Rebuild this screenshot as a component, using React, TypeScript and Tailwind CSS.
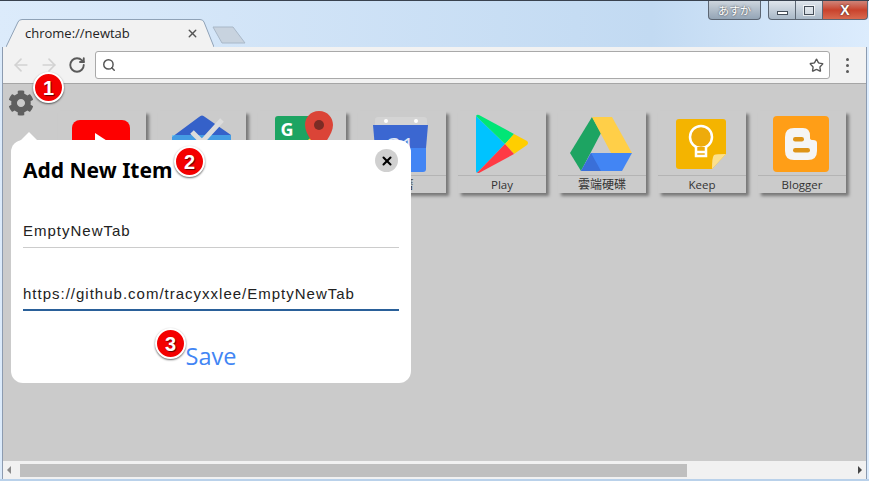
import React from "react";
import { ArrowLeft, ArrowRight, RotateCw, Search, Star, X } from "lucide-react";
import { FaCog } from "react-icons/fa";

// Tile icons, all on the same 64x64 box
const YouTubeIcon = () => (
  <svg viewBox="0 0 64 64" className="w-16 h-16">
    <rect x="2" y="9" width="58" height="42" rx="8" fill="#fe0000" />
    <path d="M25 22 L45 35 L25 47 Z" fill="#fff" />
  </svg>
);

const InboxIcon = () => (
  <svg viewBox="0 0 64 64" className="w-16 h-16">
    <path d="M2 26 L29 6 Q32 3 35 6 L61 24 L61 60 L2 60 Z" fill="#3561c9" />
    <path d="M2 24 H61 V60 H2 Z" fill="#4fc3f7" opacity="0.6" />
    <path d="M22 21 L32 31 L52 9" fill="none" stroke="#dcdcdc" strokeWidth="5" />
  </svg>
);

const MapsIcon = () => (
  <svg viewBox="0 0 64 64" className="w-16 h-16">
    <rect x="5" y="5" width="42" height="50" rx="3" fill="#1da462" />
    <path d="M30 35 L47 22 V55 H20 Z" fill="#fdd835" />
    <text x="17" y="25" fontSize="18" fontWeight="700" fill="#fff" textAnchor="middle" fontFamily="'Open Sans', sans-serif">G</text>
    <path d="M49 0 C40 0 35 7 35 14 C35 24 46 34 49 44 C52 34 63 24 63 14 C63 7 58 0 49 0 Z" fill="#db4437" />
    <circle cx="49" cy="14" r="5" fill="#7b2c25" />
  </svg>
);

const CalendarIcon = () => (
  <svg viewBox="0 0 64 64" className="w-16 h-16">
    <path d="M5 9 Q5 6 8 6 H54 Q57 6 57 9 V14 H5 Z" fill="#d4d4d4" />
    <circle cx="16" cy="10" r="2" fill="#fff" />
    <circle cx="46" cy="10" r="2" fill="#fff" />
    <path d="M3 14 H58 L56 37 H5 Z" fill="#3b67d1" />
    <path d="M5 37 H56 V58 Q56 61 53 61 H8 Q5 61 5 58 Z" fill="#4285f4" />
    <text x="31" y="44" fontSize="24" fill="#dfe6f5" textAnchor="middle" fontFamily="'Open Sans', sans-serif">31</text>
  </svg>
);

const PlayIcon = () => (
  <svg viewBox="0 0 64 64" className="w-16 h-16">
    <path d="M6 5 L35 33 L7 62 Q6 61 6 60 Z" fill="#00c3ff" />
    <path d="M6 5 Q7 3 9 4 L44 23 L35 33 Z" fill="#00e676" />
    <path d="M44 23 L57 30 Q59 32 57 34 L44 43 L35 33 Z" fill="#ffce00" />
    <path d="M35 33 L44 43 L9 62 Q8 62 7 62 Z" fill="#ff3a44" />
  </svg>
);

const DriveIcon = () => (
  <svg viewBox="0 0 64 64" className="w-16 h-16">
    <path d="M22 6 L31 22 L11 60 L0 42 Z" fill="#1da462" />
    <path d="M22 6 H42 L62 42 H41 Z" fill="#ffcf48" />
    <path d="M21 42 H62 L52 60 H11 Z" fill="#4285f4" />
    <path d="M21 42 L11 60 H31 Z" fill="#3a6fd8" />
  </svg>
);

const KeepIcon = () => (
  <svg viewBox="0 0 64 64" className="w-16 h-16">
    <path d="M9 8 H53 Q56 8 56 11 V43 L42 58 H9 Q6 58 6 55 V11 Q6 8 9 8 Z" fill="#f4b400" />
    <path d="M42 58 Q42 46 44 44 Q46 43 56 43 Z" fill="#fbe08e" />
    <circle cx="31" cy="26" r="11" fill="#eeab0b" stroke="#fff" strokeWidth="2.5" />
    <path d="M26 36 V45 H36 V36 M26 41 H36" fill="#eeab0b" stroke="#fff" strokeWidth="2.5" />
  </svg>
);

const BloggerIcon = () => (
  <svg viewBox="0 0 64 64" className="w-16 h-16">
    <rect x="3" y="5" width="56" height="56" rx="4" fill="#ff9e17" />
    <path d="M24 17 H33 Q40 17 40 25 V27 Q40 29 43 29 Q47 29 47 32 V40 Q47 49 38 49 H24 Q15 49 15 40 V26 Q15 17 24 17 Z" fill="#f5f5f5" />
    <rect x="23" y="26" width="11" height="4.5" rx="2.2" fill="#de9418" />
    <rect x="23" y="37" width="17" height="4.5" rx="2.2" fill="#de9418" />
  </svg>
);

const tiles = [
  { id: "youtube", label: "", icon: <YouTubeIcon /> },
  { id: "inbox", label: "", icon: <InboxIcon /> },
  { id: "maps", label: "", icon: <MapsIcon /> },
  { id: "calendar", label: "日曆", icon: <CalendarIcon /> },
  { id: "play", label: "Play", icon: <PlayIcon /> },
  { id: "drive", label: "雲端硬碟", icon: <DriveIcon /> },
  { id: "keep", label: "Keep", icon: <KeepIcon /> },
  { id: "blogger", label: "Blogger", icon: <BloggerIcon /> },
];

function Badge({ n, className }: { n: number; className: string }) {
  return (
    <div
      className={`absolute w-[31px] h-[31px] rounded-full bg-[#f40000] border-2 border-white shadow-[0_1px_2px_rgba(0,0,0,0.6)] flex items-center justify-center text-white text-[20px] font-bold font-['Liberation_Sans',sans-serif] [text-shadow:1px_1px_1px_rgba(0,0,0,0.6)] ${className}`}
    >
      {n}
    </div>
  );
}

export default function App() {
  return (
    <div className="relative w-[869px] h-[481px] overflow-hidden flex flex-col border-t border-[#39424f] bg-gradient-to-r from-[#dcebfb] via-[#c2daf2] via-75% to-[#dcecfd] font-['Open_Sans',sans-serif]">
      {/* Window caption */}
      <div className="h-[18px] flex justify-end pr-px">
        <div className="w-[53px] h-[19px] mr-[7px] rounded-b-[4px] border border-t-0 border-[#5c6673] bg-gradient-to-b from-[#cdd5dd] to-[#94a5b6] flex items-center justify-center text-[11px] leading-none text-white font-['Noto_Sans_CJK_JP',sans-serif] [text-shadow:0_0_2px_#333]">
          あすか
        </div>
        <div className="w-[28px] h-[19px] rounded-bl-[4px] border border-t-0 border-[#5c6673] bg-gradient-to-b from-[#dfe5ec] to-[#a9b8c7] flex items-center justify-center">
          <div className="w-[11px] h-[4px] mt-[5px] bg-white border border-[#444d58]" />
        </div>
        <div className="w-[27px] h-[19px] border-b border-r border-[#5c6673] bg-gradient-to-b from-[#dfe5ec] to-[#a9b8c7] flex items-center justify-center">
          <div className="w-[10px] h-[9px] border border-[#444d58] bg-white/40 outline outline-white/70" />
        </div>
        <div className="w-[45px] h-[19px] rounded-br-[4px] border-b border-r border-[#5c6673] bg-gradient-to-b from-[#cf8378] via-[#c9422c] to-[#d8694f] flex items-center justify-center text-white font-bold text-[14px] leading-none font-['Liberation_Sans',sans-serif] [text-shadow:0_0_2px_#222]">
          X
        </div>
      </div>

      {/* Tab strip */}
      <div className="h-[28px] flex items-end pl-[6px]">
        <div className="relative w-[208px] h-[28px] flex items-center pl-[19px] pr-[15px] justify-between">
          <svg viewBox="0 0 208 28" className="absolute inset-0 w-[208px] h-[28px]">
            <path d="M0 28 L12 3 Q13 0.5 16 0.5 H194 Q197 0.5 198 3 L208 28" fill="#f2f2f2" stroke="#8fa2b7" />
          </svg>
          <span className="relative text-[13px] leading-none text-[#222]">chrome://newtab</span>
          <X className="relative w-[13px] h-[13px] text-[#555]" strokeWidth={2.5} />
        </div>
        <svg viewBox="0 0 34 18" className="w-[34px] h-[18px] mb-[3px] -ml-[2px]">
          <path d="M1 1 H21 L33 17 H10 Z" fill="#c8d3df" stroke="#a9b8c8" strokeLinejoin="round" />
        </svg>
      </div>

      {/* Browser body */}
      <div className="flex-1 min-h-0 mx-[2px] flex flex-col border-x border-[#8c9bb0] bg-[#f2f2f2]">
        {/* Toolbar */}
        <div className="h-[37px] flex items-center border-b border-[#a6a6a6] pl-[8px]">
          <ArrowLeft className="w-[20px] h-[20px] text-[#d2d2d2]" />
          <ArrowRight className="w-[20px] h-[20px] ml-[8px] text-[#d2d2d2]" />
          <RotateCw className="w-[18px] h-[18px] ml-[9px] text-[#5a5a5a]" strokeWidth={2.5} />
          <div className="w-[735px] h-[28px] ml-[9px] rounded-[3px] border border-[#a9a9a9] bg-white flex items-center justify-between pl-[6px] pr-[5px]">
            <Search className="w-[14px] h-[14px] text-[#555]" strokeWidth={2.5} />
            <Star className="w-[15px] h-[15px] text-[#555]" strokeWidth={2.2} />
          </div>
          <div className="ml-[16px] flex flex-col gap-[3px]">
            <div className="w-[3px] h-[3px] rounded-full bg-[#5a5a5a]" />
            <div className="w-[3px] h-[3px] rounded-full bg-[#5a5a5a]" />
            <div className="w-[3px] h-[3px] rounded-full bg-[#5a5a5a]" />
          </div>
        </div>

        {/* New tab page */}
        <div className="flex-1 min-h-0 bg-[#cbcbcb] pl-[55px] pt-[27px] overflow-hidden">
          <div className="flex gap-[12px]">
            {tiles.map((tile) => (
              <div key={tile.id} className="w-[88px] h-[82px] shrink-0 flex flex-col items-center shadow-[3px_3px_3px_#777]">
                <div className="h-[64px] shrink-0">{tile.icon}</div>
                <div className={`w-full border-t border-[#b4b4b4] text-center leading-[18px] text-[#333] font-['Open_Sans','Noto_Sans_CJK_TC',sans-serif] ${tile.id === "drive" ? "text-[12px]" : "text-[11.5px]"}`}>
                  {tile.label}
                </div>
              </div>
            ))}
          </div>
        </div>

        {/* Horizontal scrollbar */}
        <div className="h-[18px] flex items-center justify-between px-[4px] bg-[#f1f1f1]">
          <div className="w-0 h-0 border-y-[4px] border-y-transparent border-r-[4px] border-r-[#8a8a8a]" />
          <div className="w-[667px] h-[13px] mr-auto ml-[9px] bg-[#bfbfbf]" />
          <div className="w-0 h-0 border-y-[4px] border-y-transparent border-l-[4px] border-l-[#444]" />
        </div>
      </div>
      <div className="h-[2px] bg-[#b9d1ea]" />

      {/* Settings gear */}
      <FaCog className="absolute left-[8px] top-[89px] w-[26px] h-[26px] text-[#5f5f5f]" />

      {/* Add item dialog */}
      <div className="absolute left-[11px] top-[139px] w-[400px] h-[243px] rounded-[12px] bg-white px-[12px] pt-[17px] flex flex-col">
        <div className="absolute left-[9px] -top-[8px] w-0 h-0 border-x-[9px] border-x-transparent border-b-[9px] border-b-white" />
        <div className="flex justify-between items-start">
          <h2 className="h-[28px] text-[21px] leading-[26px] font-bold text-black font-['Noto_Sans',sans-serif]">Add New Item</h2>
          <button className="w-[23px] h-[23px] -mt-[8px] mr-px rounded-full bg-[#d0d0d0] flex items-center justify-center">
            <X className="w-[14px] h-[14px] text-black" strokeWidth={3.5} />
          </button>
        </div>
        <input
          readOnly
          value="EmptyNewTab"
          className="mt-[29px] h-[34px] w-full border-b border-[#cccccc] bg-transparent text-[15px] tracking-[1px] text-[#222] outline-none font-['Liberation_Sans',sans-serif]"
        />
        <input
          readOnly
          value="https://github.com/tracyxxlee/EmptyNewTab"
          className="mt-[29px] h-[34px] w-full border-b-2 border-[#2a6099] bg-transparent text-[15px] tracking-[1px] text-[#222] outline-none font-['Liberation_Sans',sans-serif]"
        />
        <button className="mt-[27px] text-[23.5px] leading-[36px] text-[#4285f4] text-center">Save</button>
      </div>

      <Badge n={1} className="left-[33px] top-[71px]" />
      <Badge n={2} className="left-[174px] top-[145px]" />
      <Badge n={3} className="left-[155px] top-[327px]" />
    </div>
  );
}
